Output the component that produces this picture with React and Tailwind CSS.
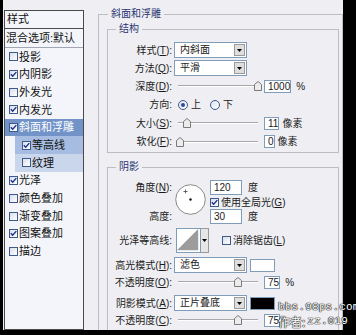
import React from 'react'

const FONT = "font-['Liberation_Sans','Noto_Sans_CJK_SC',sans-serif]"

function Check({ on }) {
  return (
    <span className="w-[9px] h-[9px] shrink-0 border border-[#3d5a8c] bg-[linear-gradient(135deg,#d9dee8,#ffffff)] flex items-center justify-center">
      {on && (
        <svg width="7" height="7" viewBox="0 0 7 7">
          <path d="M0.8 3.3 L2.7 5.3 L6.3 1.1" stroke="#1f2f8f" strokeWidth="1.4" fill="none" />
        </svg>
      )}
    </span>
  )
}

function Radio({ on }) {
  return (
    <span className="w-[10px] h-[10px] shrink-0 rounded-full border border-[#3d5a8c] bg-[linear-gradient(135deg,#dfe3ea,#ffffff)] flex items-center justify-center">
      {on && <span className="w-[4px] h-[4px] rounded-full bg-[#2a4aa0]" />}
    </span>
  )
}

function Select({ value }) {
  return (
    <div className="flex w-[73px] h-[16px] border border-[#7f9db9] bg-white">
      <span className="flex-1 pl-[5px] leading-[14px]">{value}</span>
      <span className="w-[11px] my-[1px] mr-[1px] bg-[#dedede] border border-[#9a9a9a] flex items-center justify-center">
        <svg width="5" height="3" viewBox="0 0 5 3"><path d="M0 0H5L2.5 3Z" fill="#000" /></svg>
      </span>
    </div>
  )
}

function Slider({ thumb }) {
  return (
    <div className="relative w-[80px] h-[12px] ml-[3px] shrink-0">
      <div className="absolute left-0 right-0 top-[5px] h-[2px] bg-[#a8a8a8] border-b border-white" />
      <svg className={`absolute top-[1px] ${thumb}`} width="8" height="10" viewBox="0 0 8 10">
        <path d="M0.5 3.5 L4 0.5 L7.5 3.5 V9.5 H0.5 Z" fill="#ececec" stroke="#7a7a7a" />
      </svg>
    </div>
  )
}

function Num({ value, w = 'w-[31px]' }) {
  return (
    <span className={`${w} h-[15px] shrink-0 border border-[#7f9db9] bg-white pl-[3px] leading-[13px]`}>{value}</span>
  )
}

function Label({ children }) {
  return <span className="w-[64px] shrink-0 text-right whitespace-nowrap">{children}</span>
}

const ITEMS = [
  { t: '投影' },
  { t: '内阴影', on: true },
  { t: '外发光' },
  { t: '内发光', on: true },
  { t: '斜面和浮雕', on: true, sel: true },
  { t: '等高线', on: true, sub: 'bg-[#a6bce0]' },
  { t: '纹理', sub: 'bg-[#c9d6ec]' },
  { t: '光泽', on: true },
  { t: '颜色叠加' },
  { t: '渐变叠加' },
  { t: '图案叠加', on: true },
  { t: '描边' },
]

function StyleList() {
  return (
    <div className="ml-[1px] mt-[10px] w-[80px] h-[320px] shrink-0 border border-[#4a4a4a] bg-[#f3f5fa] text-[11px] text-[#111]">
      <div className="h-[18px] border-b border-[#4a4a4a] pl-[2px] flex items-center">样式</div>
      <div className="h-[19px] border-b border-[#a0a6b4] pl-[1px] flex items-center whitespace-nowrap">混合选项:默认</div>
      {ITEMS.map(it => (
        <div key={it.t}
          className={`h-[17.7px] flex items-center gap-[1px] ${it.sub ? `ml-[10px] pl-[7px] ${it.sub}` : 'pl-[4px]'} ${it.sel ? 'bg-[#7193c8] text-white' : ''}`}>
          <Check on={it.on} />
          <span>{it.t}</span>
        </div>
      ))}
    </div>
  )
}

export default function App() {
  return (
    <div className={`relative w-[356px] h-[335px] bg-black overflow-hidden ${FONT}`}>
      <div className="ml-[3px] w-[340px] h-[330px] bg-[#efeff3] flex overflow-hidden text-[10px] text-[#1a1a1a]">
        <StyleList />

        <div className="flex-1 min-w-0">
          <fieldset className="ml-[14px] mt-[7px] w-[245px] border border-[#bdbdc4]">
            <legend className="ml-[9px] px-[3px] h-[14px] leading-[14px] text-[#2a3570]">斜面和浮雕</legend>

            {/* 结构 */}
            <fieldset className="ml-[8px] mt-[1px] w-[232px] border border-[#bdbdc4] pt-[5px] pb-[1px]">
              <legend className="ml-[8px] px-[3px] h-[14px] leading-[14px] text-[#2a3570]">结构</legend>
              <div className="h-[18px] flex items-center gap-[2px]">
                <Label>样式(<u>T</u>):</Label><Select value="内斜面" />
              </div>
              <div className="h-[18px] flex items-center gap-[2px]">
                <Label>方法(<u>Q</u>):</Label><Select value="平滑" />
              </div>
              <div className="h-[18px] flex items-center gap-[3px]">
                <Label>深度(<u>D</u>):</Label>
                <Slider thumb="left-[76px]" />
                <span className="ml-[3px]"><Num value="1000" /></span>
                <span className="ml-[2px]">%</span>
              </div>
              <div className="h-[19px] flex items-center gap-[3px]">
                <Label>方向:</Label>
                <span className="ml-[3px]"><Radio on /></span>
                <span>上</span>
                <span className="ml-[6px]"><Radio /></span>
                <span>下</span>
              </div>
              <div className="h-[18px] flex items-center gap-[3px]">
                <Label>大小(<u>S</u>):</Label>
                <Slider thumb="left-[5px]" />
                <span className="ml-[3px]"><Num value="11" /></span>
                <span>像素</span>
              </div>
              <div className="h-[19px] flex items-center gap-[3px]">
                <Label>软化(<u>F</u>):</Label>
                <Slider thumb="left-[-2px]" />
                <span className="ml-[3px]"><Num value="0" /></span>
                <span>像素</span>
              </div>
            </fieldset>

            {/* 阴影 */}
            <fieldset className="ml-[8px] mt-[7px] w-[232px] h-[175px] border border-[#bdbdc4] pt-[6px]">
              <legend className="ml-[8px] px-[3px] h-[14px] leading-[14px] text-[#2a3570]">阴影</legend>

              <div className="flex h-[44px]">
                <div className="w-[64px] flex flex-col justify-between items-end">
                  <span className="h-[15px] leading-[15px]">角度(<u>N</u>):</span>
                  <span className="h-[15px] leading-[15px]">高度:</span>
                </div>
                <svg className="ml-[3px] mt-[4px] shrink-0" width="31" height="31" viewBox="0 0 31 31">
                  <circle cx="15.5" cy="15.5" r="14.8" fill="#fff" stroke="#8a8a8a" />
                  <circle cx="15.5" cy="15.5" r="1.2" fill="#111" />
                  <path d="M10.5 5.5V9.5M8.5 7.5H12.5" stroke="#444" strokeWidth="0.8" />
                </svg>
                <div className="ml-[4px] flex flex-col">
                  <div className="h-[15px] flex items-center gap-[6px]"><Num value="120" w="w-[32px]" /><span>度</span></div>
                  <div className="h-[14px] flex items-center gap-[2px]"><Check on /><span>使用全局光(<u>G</u>)</span></div>
                  <div className="h-[15px] flex items-center gap-[6px]"><Num value="30" w="w-[32px]" /><span>度</span></div>
                </div>
              </div>

              <div className="mt-[4px] h-[25px] flex items-center gap-[2px]">
                <Label>光泽等高线:</Label>
                <div className="ml-[2px] flex h-[25px]">
                  <svg width="25" height="25" viewBox="0 0 25 25" className="border border-[#7f9db9] bg-white">
                    <path d="M0 23 L23 0 V23 Z" fill="#9c9c9c" />
                  </svg>
                  <span className="w-[8px] h-[25px] border border-l-0 border-[#9a9a9a] bg-[#e6e6e6] flex items-center justify-center">
                    <svg width="5" height="3" viewBox="0 0 5 3"><path d="M0 0H5L2.5 3Z" fill="#000" /></svg>
                  </span>
                </div>
                <span className="ml-[11px]"><Check /></span>
                <span>消除锯齿(<u>L</u>)</span>
              </div>

              <div className="mt-[3px] h-[18px] flex items-center gap-[2px]">
                <Label>高光模式(<u>H</u>):</Label>
                <Select value="滤色" />
                <span className="ml-[1px] w-[25px] h-[13px] border border-[#7f9db9] bg-white" />
              </div>
              <div className="h-[16px] flex items-center gap-[3px]">
                <Label>不透明度(<u>O</u>):</Label>
                <Slider thumb="left-[56px]" />
                <span className="ml-[3px]"><Num value="75" /></span>
                <span className="ml-[2px]">%</span>
              </div>
              <div className="mt-[4px] h-[18px] flex items-center gap-[2px]">
                <Label>阴影模式(<u>A</u>):</Label>
                <Select value="正片叠底" />
                <span className="ml-[1px] w-[25px] h-[13px] border border-[#7f9db9] bg-black" />
              </div>
              <div className="h-[16px] flex items-center gap-[3px]">
                <Label>不透明度(<u>C</u>):</Label>
                <Slider thumb="left-[56px]" />
                <span className="ml-[3px]"><Num value="75" /></span>
              </div>
            </fieldset>
          </fieldset>
        </div>
      </div>

      {/* watermark */}
      <div className="absolute left-[278px] top-[300px] text-white [text-shadow:0_0_1px_#000,0_0_1px_#000,0_0_1px_#000] whitespace-nowrap">
        <div className="font-['Liberation_Mono',monospace] text-[11px] leading-[14px] tracking-[0.2px]">bbs.98ps.com</div>
        <div className="text-[12px] leading-[15px] flex items-center gap-[2px]">
          <span className="font-['Noto_Sans_CJK_SC',sans-serif]">作者:</span>
          <span className="font-['Liberation_Mono',monospace] text-[11px] tracking-[0.2px]">zz.019</span>
        </div>
      </div>
    </div>
  )
}
